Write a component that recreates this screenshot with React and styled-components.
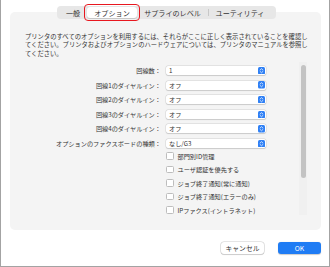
import React from "react"
import styled, { createGlobalStyle } from "styled-components"

const Global = createGlobalStyle`
  html, body {
    margin: 0;
    padding: 0;
    background: #ffffff;
  }
  body {
    font-family: "Noto Sans CJK JP", "Noto Sans", sans-serif;
    color: #2b2b2b;
  }
`

const Window = styled.div`
  width: 330px;
  height: 267px;
  box-sizing: border-box;
  border: 1.5px solid #a3a3a3;
  border-top: none;
  background: #ffffff;
  display: flex;
  flex-direction: column;
`

const Panel = styled.div`
  margin: 12px 8px 0 9px;
  height: 218px;
  background: #f4f4f4;
  border-radius: 5px;
  display: flex;
  flex-direction: column;
`

const TabBar = styled.div`
  align-self: center;
  margin-top: -6px;
  margin-left: 2px;
  height: 13px;
  width: 219px;
  background: #e7e7e7;
  border-radius: 4px;
  display: flex;
  align-items: center;
  padding: 0 2px;
  box-sizing: border-box;
`

const Tab = styled.div`
  position: relative;
  height: 11px;
  width: ${p => p.w}px;
  display: flex;
  align-items: center;
  justify-content: center;
  font-size: 7.1px;
  color: #333;
  border-radius: 3px;
  background: ${p => (p.active ? "#ffffff" : "transparent")};
  box-shadow: ${p => (p.active ? "0 0.5px 1px rgba(0,0,0,0.15)" : "none")};
`

const Highlight = styled.div`
  position: absolute;
  left: -3px;
  right: -3px;
  top: -3px;
  bottom: -3px;
  border: 1.6px solid #e8171f;
  border-radius: 4px;
`

const Sep = styled.div`
  width: 1px;
  height: 7px;
  background: #c8c8c8;
`

const Intro = styled.p`
  margin: 14px 9px 0 15px;
  font-size: 6.3px;
  line-height: 8.4px;
  color: #333;
`

const Body = styled.div`
  margin-top: 4px;
  height: 153px;
  overflow: hidden;
  display: flex;
`

const Form = styled.div`
  flex: 1;
  display: grid;
  grid-template-columns: 151px 100px;
  column-gap: 5px;
  grid-auto-rows: 14.6px;
  align-items: center;
  padding-top: 1px;
`

const Label = styled.div`
  text-align: right;
  font-size: 6.2px;
  color: #333;
  white-space: nowrap;
`

const Select = styled.div`
  height: 9px;
  background: #ffffff;
  border-radius: 2px;
  box-shadow: 0 0 0 0.5px rgba(0, 0, 0, 0.12), 0 0.5px 1px rgba(0, 0, 0, 0.12);
  display: flex;
  align-items: center;
  justify-content: space-between;
  padding: 0 1px 0 3px;
  font-size: 6.2px;
  color: #333;
`

const CheckList = styled.div`
  grid-column: 2;
  display: flex;
  flex-direction: column;
  gap: 6.9px;
  padding-top: 2px;
  align-self: start;
`

const CheckRow = styled.div`
  display: flex;
  align-items: center;
  gap: 4px;
  height: 6.6px;
  font-size: 6.2px;
  color: #333;
  white-space: nowrap;
`

const Box = styled.div`
  width: 5.5px;
  height: 5.5px;
  background: #fff;
  border: 0.6px solid #bdbdbd;
  border-radius: 1.5px;
`

const Track = styled.div`
  width: 8px;
  margin-right: 14px;
  background: #f0f0f0;
  display: flex;
  justify-content: center;
  padding-top: 3px;
`

const Thumb = styled.div`
  width: 5px;
  height: 113px;
  background: #c3c3c3;
  border-radius: 3px;
`

const Footer = styled.div`
  display: flex;
  justify-content: flex-end;
  gap: 14px;
  margin: 12px 8px 0 0;
`

const Button = styled.div`
  width: 43px;
  height: 12px;
  border-radius: 3px;
  display: flex;
  align-items: center;
  justify-content: center;
  font-size: 6.8px;
  background: ${p => (p.primary ? "#1f7cf4" : "#ffffff")};
  color: ${p => (p.primary ? "#ffffff" : "#333")};
  box-shadow: ${p =>
    p.primary ? "0 0.5px 1px rgba(0,0,0,0.2)" : "0 0 0 0.6px rgba(0,0,0,0.18), 0 0.5px 1px rgba(0,0,0,0.12)"};
`

function Stepper() {
  return (
    <svg width="7" height="7.5" viewBox="0 0 14 15">
      <rect x="0" y="0" width="14" height="15" rx="3" fill="#2f80f5" />
      <path d="M4.3 6 L7 3.4 L9.7 6" fill="none" stroke="#fff" strokeWidth="1.5" strokeLinecap="round" strokeLinejoin="round" />
      <path d="M4.3 9 L7 11.6 L9.7 9" fill="none" stroke="#fff" strokeWidth="1.5" strokeLinecap="round" strokeLinejoin="round" />
    </svg>
  )
}

const rows = [
  ["回線数：", "1"],
  ["回線1のダイヤルイン：", "オフ"],
  ["回線2のダイヤルイン：", "オフ"],
  ["回線3のダイヤルイン：", "オフ"],
  ["回線4のダイヤルイン：", "オフ"],
  ["オプションのファクスボードの種類：", "なし/G3"],
]

const checks = [
  "部門別ID管理",
  "ユーザ認証を優先する",
  "ジョブ終了通知(常に通知)",
  "ジョブ終了通知(エラーのみ)",
  "IPファクス(イントラネット)",
]

export default function App() {
  return (
    <>
      <Global />
      <Window>
        <Panel>
          <TabBar>
            <Tab w={28}>一般</Tab>
            <Tab w={50} active>
              オプション
              <Highlight />
            </Tab>
            <Tab w={71}>サプライのレベル</Tab>
            <Sep />
            <Tab w={62}>ユーティリティ</Tab>
          </TabBar>
          <Intro>
            プリンタのすべてのオプションを利用するには、それらがここに正しく表示されていることを確認してください。プリンタおよびオプションのハードウェアについては、プリンタのマニュアルを参照してください。
          </Intro>
          <Body>
            <Form>
              {rows.map(([label, value]) => (
                <React.Fragment key={label}>
                  <Label>{label}</Label>
                  <Select>
                    <span>{value}</span>
                    <Stepper />
                  </Select>
                </React.Fragment>
              ))}
              <CheckList>
                {checks.map(c => (
                  <CheckRow key={c}>
                    <Box />
                    {c}
                  </CheckRow>
                ))}
              </CheckList>
            </Form>
            <Track>
              <Thumb />
            </Track>
          </Body>
        </Panel>
        <Footer>
          <Button>キャンセル</Button>
          <Button primary>OK</Button>
        </Footer>
      </Window>
    </>
  )
}
